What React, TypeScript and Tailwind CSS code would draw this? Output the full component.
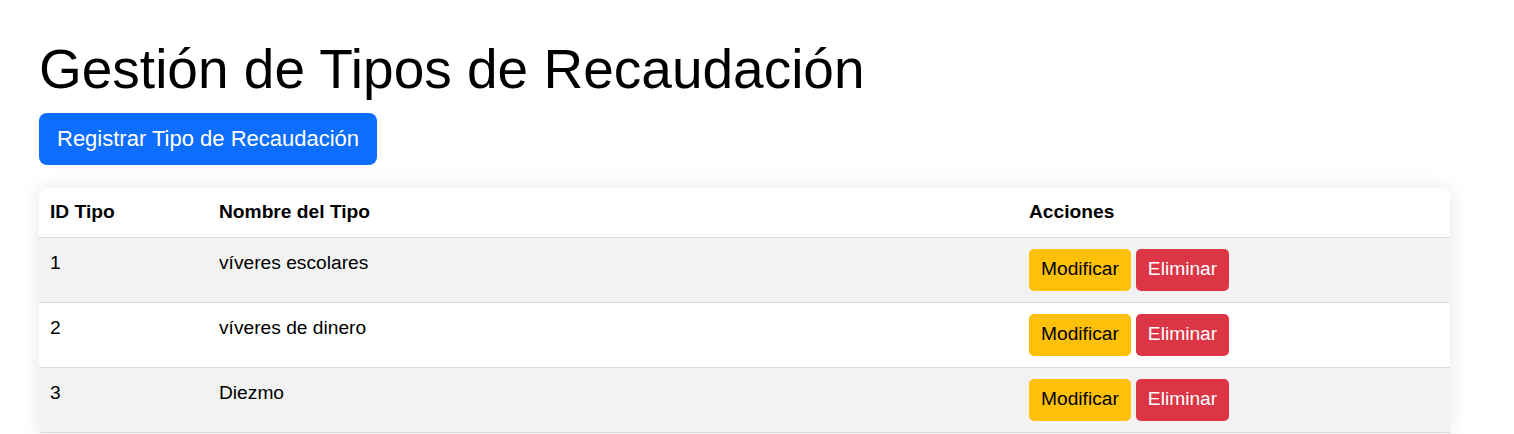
const tipos = [
  { id: 1, nombre: "víveres escolares" },
  { id: 2, nombre: "víveres de dinero" },
  { id: 3, nombre: "Diezmo" },
];

export default function App() {
  return (
    <div className="min-h-screen bg-white pt-[36px] pl-[39px] text-black font-['Liberation_Sans',Arial,sans-serif]">
      <h1 className="text-[55px] leading-[66px] font-normal mb-[11px]">Gestión de Tipos de Recaudación</h1>
      <button className="h-[52px] px-[18px] rounded-[8px] bg-[#0d6efd] text-white text-[22px] leading-none">
        Registrar Tipo de Recaudación
      </button>

      <div className="mt-[23px] w-[1411px] rounded-t-[8px] bg-white shadow-[0_0_20px_rgba(0,0,0,0.1)]">
        <table className="w-full border-collapse text-left text-[19.2px] leading-[1.5]">
          <thead>
            <tr className="border-b border-[#dcdcdc]">
              <th className="w-[169px] pl-[11px] pr-[10px] py-[10px] font-bold">ID Tipo</th>
              <th className="w-[811px] pl-[11px] pr-[10px] py-[10px] font-bold">Nombre del Tipo</th>
              <th className="px-[10px] py-[10px] font-bold">Acciones</th>
            </tr>
          </thead>
          <tbody>
            {tipos.map((t, i) => (
              <tr
                key={t.id}
                className={"border-b border-[#dcdcdc] " + (i % 2 === 0 ? "bg-[#f2f2f2]" : "bg-white")}
              >
                <td className="pl-[11px] pr-[10px] py-[11px] align-top">{t.id}</td>
                <td className="pl-[11px] pr-[10px] py-[11px] align-top">{t.nombre}</td>
                <td className="px-[10px] py-[11px] align-top">
                  <div className="flex gap-[5px]">
                    <button className="h-[42px] px-3 rounded-[5px] bg-[#ffc107] text-black">Modificar</button>
                    <button className="h-[42px] px-3 rounded-[5px] bg-[#dc3545] text-white">Eliminar</button>
                  </div>
                </td>
              </tr>
            ))}
          </tbody>
        </table>
      </div>
    </div>
  );
}
